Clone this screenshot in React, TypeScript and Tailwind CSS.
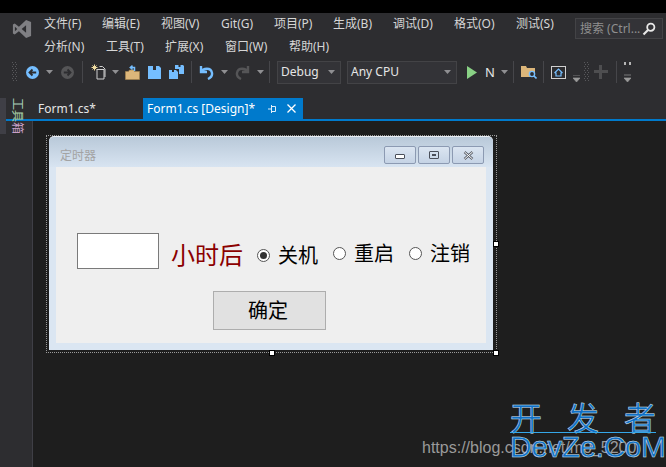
import React from 'react';

const uiFont = "[font-family:'Noto_Sans','Noto_Sans_CJK_SC',sans-serif]";

const firstMenu = [
  { label: '文件(F)', width: 'w-[58px]' },
  { label: '编辑(E)', width: 'w-[59px]' },
  { label: '视图(V)', width: 'w-[60px]' },
  { label: 'Git(G)', width: 'w-[53px]' },
  { label: '项目(P)', width: 'w-[59px]' },
  { label: '生成(B)', width: 'w-[60px]' },
  { label: '调试(D)', width: 'w-[61px]' },
  { label: '格式(O)', width: 'w-[62px]' },
  { label: '测试(S)', width: 'w-[59px]' },
];

const secondMenu = [
  { label: '分析(N)', width: 'w-[62px]' },
  { label: '工具(T)', width: 'w-[59px]' },
  { label: '扩展(X)', width: 'w-[60px]' },
  { label: '窗口(W)', width: 'w-[64px]' },
  { label: '帮助(H)', width: 'w-[60px]' },
];

function Caret({ className = '' }: { className?: string }) {
  return (
    <svg width="7" height="4" viewBox="0 0 7 4" className={`shrink-0 ${className}`}>
      <path d="M0 0h7L3.5 4z" fill="#8f8f92" />
    </svg>
  );
}

function Sep({ className = '' }: { className?: string }) {
  return <div className={`w-px h-[22px] bg-[#46464a] shrink-0 ${className}`} />;
}

function Grip({ className = '' }: { className?: string }) {
  return (
    <svg width="5" height="20" viewBox="0 0 5 20" className={`shrink-0 ${className}`}>
      {[0, 2, 4, 6, 8, 10, 12, 14, 16, 18].map((y) => (
        <g key={y} fill="#58585b">
          <rect x={y % 4 === 0 ? 0 : 1} y={y} width="1" height="1" />
          <rect x={y % 4 === 0 ? 3 : 4} y={y} width="1" height="1" />
        </g>
      ))}
    </svg>
  );
}

function Combo({ label, width }: { label: string; width: string }) {
  return (
    <div className={`${width} h-[23px] flex items-center justify-between bg-[#333337] border border-[#434346] pl-[3px] pr-[5px] shrink-0`}>
      <span className="text-[12px] leading-none text-[#e6e6e6]">{label}</span>
      <Caret />
    </div>
  );
}

function TitleButton({ children }: { children: React.ReactNode }) {
  return (
    <div className="w-8 h-[18px] rounded-[2px] border border-[#8c9ab2] bg-gradient-to-b from-[#dbe5f1] to-[#c5d3e5] flex items-center justify-center">
      {children}
    </div>
  );
}

function Radio({ checked = false, className = '' }: { checked?: boolean; className?: string }) {
  return (
    <div className={`w-[13px] h-[13px] rounded-full border border-[#555] bg-white flex items-center justify-center shrink-0 ${className}`}>
      {checked && <div className="w-[7px] h-[7px] rounded-full bg-[#333]" />}
    </div>
  );
}

function Handle({ className }: { className: string }) {
  return <div className={`absolute w-[6px] h-[6px] bg-white border border-black ${className}`} />;
}

export default function App() {
  return (
    <div className={`relative w-[666px] h-[467px] overflow-hidden bg-[#1e1e1e] flex flex-col ${uiFont}`}>
      <div className="h-[13px] bg-black shrink-0" />

      {/* title + menu */}
      <div className="bg-[#2d2d30] h-[106px] shrink-0 flex flex-col">
        <div className="flex h-[44px] shrink-0">
          <svg width="20" height="20" viewBox="0 0 22 22" className="ml-3 mt-[6px] shrink-0">
            <path d="M15.5 1L21 3.4v15.2L15.5 21 7.6 13.6 3 17l-2-1V6l2-1 4.6 3.4zM15.5 6.8L10.6 11l4.9 4.2zM3.2 8.4v5.2L5.8 11z" fill="#7f7f83" fillRule="evenodd" />
          </svg>
          <div className="ml-3 w-[531px] text-[12px] leading-[23px] text-[#d6d6d6] shrink-0">
            <div className="flex h-[23px] mt-[-1px]">
              {firstMenu.map((m) => (
                <span key={m.label} className={`${m.width} shrink-0 whitespace-nowrap`}>{m.label}</span>
              ))}
            </div>
            <div className="flex h-[22px]">
              {secondMenu.map((m) => (
                <span key={m.label} className={`${m.width} shrink-0 whitespace-nowrap`}>{m.label}</span>
              ))}
            </div>
          </div>
          <div className="w-[88px] h-[21px] mt-[5px] border border-[#434346] bg-[#333337] flex items-center justify-between pl-1 pr-[6px] text-[12px] text-[#8f8f8f] shrink-0">
            <span className="whitespace-nowrap">搜索 (Ctrl...</span>
            <svg width="14" height="14" viewBox="0 0 14 14" className="shrink-0">
              <circle cx="8.8" cy="5.2" r="3.6" fill="none" stroke="#e8e8e8" strokeWidth="1.8" />
              <path d="M6 8L1.5 12.5" stroke="#e8e8e8" strokeWidth="2.2" />
            </svg>
          </div>
        </div>

        {/* toolbar */}
        <div className="flex items-center h-[26px] mt-[2px] shrink-0">
          <Grip className="ml-3" />
          <svg width="13" height="13" viewBox="0 0 14 14" className="ml-[9px] shrink-0">
            <circle cx="7" cy="7" r="7" fill="#75beff" />
            <path d="M11 7H4M7 3.8L3.8 7 7 10.2" fill="none" stroke="#2d2d30" strokeWidth="2" />
          </svg>
          <Caret className="ml-[7px]" />
          <svg width="13" height="13" viewBox="0 0 14 14" className="ml-2 shrink-0">
            <circle cx="7" cy="7" r="7" fill="#555557" />
            <path d="M3 7h7M7 3.8L10.2 7 7 10.2" fill="none" stroke="#2d2d30" strokeWidth="2" />
          </svg>
          <Sep className="ml-[8px]" />
          <svg width="15" height="16" viewBox="0 0 15 16" className="ml-2 shrink-0">
            <path d="M6 5.5h7v9.500H6zM8.500 2.500h3l2.500 2.500v8" fill="none" stroke="#d0d0d0" strokeWidth="1" />
            <path d="M3.5 0.5v6M0.5 3.5h6M1.500 1.500l4 4M5.500 1.500l-4 4" stroke="#f0dca0" strokeWidth="1" />
          </svg>
          <Caret className="ml-[6px]" />
          <svg width="15" height="15" viewBox="0 0 15 15" className="ml-[6px] shrink-0">
            <path d="M0.500 6.500h3l1-1.500h5v1.500h5v8h-14z" fill="#dcb67a" stroke="#a5844f" strokeWidth="0.7" />
            <path d="M9.500 6V2.500H5.500M7.500 0.700L5.300 2.500 7.500 4.500" fill="none" stroke="#75beff" strokeWidth="1.500" />
          </svg>
          <svg width="13" height="13" viewBox="0 0 13 13" className="ml-[8px] shrink-0">
            <path d="M0 0h11l2 2v11H0z" fill="#75beff" />
            <path d="M5 0h3v4H5z" fill="#2d2d30" />
          </svg>
          <svg width="15" height="14" viewBox="0 0 15 14" className="ml-2 shrink-0">
            <path d="M0 5h7l2 2v7H0z" fill="#75beff" />
            <path d="M6 0h8l1 1v8h-5V4H6z" fill="#75beff" />
            <path d="M3 5h2v2H3zM9.500 0h2v2h-2z" fill="#2d2d30" />
          </svg>
          <Sep className="ml-[7px]" />
          <svg width="15" height="16" viewBox="0 0 15 16" className="ml-[7px] shrink-0">
            <path d="M2 2v6h6M2 8c2-4 10-5 11 1 .5 3-2 5-4 6" fill="none" stroke="#75beff" strokeWidth="2.4" />
          </svg>
          <Caret className="ml-[7px]" />
          <svg width="15" height="16" viewBox="0 0 15 16" className="ml-[7px] shrink-0">
            <path d="M13 2v6H7M13 8C11 4 3 3 2 9c-.5 3 2 5 4 6" fill="none" stroke="#555557" strokeWidth="2.4" />
          </svg>
          <Caret className="ml-[7px]" />
          <Sep className="ml-[5px]" />
          <div className="ml-[7px]"><Combo label="Debug" width="w-[64px]" /></div>
          <div className="ml-[6px]"><Combo label="Any CPU" width="w-[110px]" /></div>
          <svg width="10" height="13" viewBox="0 0 10 13" className="ml-[10px] shrink-0">
            <path d="M0 0l10 6.500L0 13z" fill="#89d185" />
          </svg>
          <span className="ml-2 w-[15px] text-[13px] leading-none text-[#e6e6e6] shrink-0">N</span>
          <Caret className="ml-px" />
          <Sep className="ml-[5px]" />
          <svg width="16" height="14" viewBox="0 0 16 14" className="ml-[7px] shrink-0">
            <path d="M0 1h5l1 2h8v9H0z" fill="#dcb67a" />
            <circle cx="11" cy="9" r="2.600" fill="#2d2d30" stroke="#75beff" strokeWidth="1.400" />
            <path d="M13 11l2.500 2.500" stroke="#75beff" strokeWidth="1.600" />
          </svg>
          <Sep className="ml-[6px]" />
          <svg width="15" height="13" viewBox="0 0 15 13" className="ml-[7px] shrink-0">
            <rect x="0.500" y="0.500" width="14" height="12" fill="none" stroke="#d0d0d0" />
            <path d="M3.500 7L7.500 3l4 4M5 6.500V10h5V6.500" fill="none" stroke="#75beff" strokeWidth="1.200" />
          </svg>
          <svg width="7" height="7" viewBox="0 0 7 7" className="ml-[7px] mt-[12px] shrink-0">
            <path d="M0 0h7M0 3h7L3.500 7z" stroke="#9a9a9a" fill="#9a9a9a" strokeWidth="0.700" />
          </svg>
          <Grip className="ml-1" />
          <svg width="14" height="14" viewBox="0 0 14 14" className="ml-[5px] shrink-0">
            <path d="M5 0h3v5h6v3H8v6H5V8H0V5h5z" fill="#4e4e50" />
          </svg>
          <Sep className="ml-[8px]" />
          <svg width="7" height="20" viewBox="0 0 7 20" className="ml-[7px] shrink-0">
            <path d="M0 0h2v3H0zM5 0h2v3H5z" fill="#b5b5b5" />
            <path d="M0 13h7M0 16h7l-3.500 4z" stroke="#9a9a9a" fill="#9a9a9a" strokeWidth="0.700" />
          </svg>
        </div>

        {/* tabs */}
        <div className="flex mt-[13px] h-[21px] shrink-0 text-[12px] leading-[22px]">
          <div className="ml-[33px] w-[110px] pl-[5px] text-[#e6e6e6] whitespace-nowrap">Form1.cs*</div>
          <div className="w-[160px] bg-[#007acc] pl-1 text-white flex items-center whitespace-nowrap">
            <span className="w-[121px]">Form1.cs [Design]*</span>
            <svg width="9" height="8" viewBox="0 0 9 8" className="shrink-0">
              <path d="M0 4h3M3.500 1.500h4v5h-4zM3.500 0v8" fill="none" stroke="#dfeefa" strokeWidth="1" />
            </svg>
            <svg width="9" height="9" viewBox="0 0 9 9" className="ml-[10px] shrink-0">
              <path d="M0.500 0.500l8 8M8.500 0.500l-8 8" stroke="#fff" strokeWidth="1.300" />
            </svg>
          </div>
        </div>
      </div>

      <div className="h-[2px] bg-[#007acc] shrink-0" />

      <div className="flex flex-1 min-h-0">
        <div className="w-[33px] bg-[#2d2d30] border-r border-[#3f3f46] shrink-0" />
        <div className="flex-1 pl-[13px] pt-[14px]">
          {/* form designer */}
          <div className="relative w-[451px] h-[218px] border border-dotted border-[#9a9a9a] pl-[2px] pr-[3px] pb-[2px]">
            <div className="h-full rounded-t-[5px] bg-[#dbe6f2] border-t border-[#e8edf3] flex flex-col">
              <div className="h-[30px] shrink-0 rounded-t-[5px] bg-gradient-to-b from-[#b9c9d9] to-[#d8e4f1] flex items-start justify-between pl-[11px] pr-[9px] pt-[9px]">
                <span className="text-[12px] leading-[14px] text-[#a3a3a3] mt-[3px]">定时器</span>
                <div className="flex gap-[2px]">
                  <TitleButton>
                    <div className="w-[10px] h-[5px] border border-[#4a4f5a] bg-white rounded-[1px] mt-[3px]" />
                  </TitleButton>
                  <TitleButton>
                    <div className="w-[10px] h-[8px] border border-[#4a4f5a] flex items-center justify-center rounded-[1px]">
                      <div className="w-1 h-[2px] border border-[#4a4f5a]" />
                    </div>
                  </TitleButton>
                  <TitleButton>
                    <svg width="11" height="9" viewBox="0 0 11 9">
                      <path d="M1.500 1l8 7M9.500 1l-8 7" stroke="#5a5f6a" strokeWidth="2.400" />
                      <path d="M1.500 1l8 7M9.500 1l-8 7" stroke="#fff" strokeWidth="1" />
                    </svg>
                  </TitleButton>
                </div>
              </div>
              <div className="mx-[7px] mb-[7px] flex-1 bg-[#efefef] flex flex-col items-start pt-[66px]">
                <div className="flex items-center h-[36px] text-[20px] leading-none text-black">
                  <div className="ml-[21px] w-[82px] h-[36px] bg-white border border-[#7a7a7a] shrink-0" />
                  <span className="ml-3 text-[24px] text-[#8b0000] whitespace-nowrap mt-[7px]">小时后</span>
                  <Radio checked className="ml-[14px] mt-[9px]" />
                  <span className="ml-2 whitespace-nowrap mt-[10px]">关机</span>
                  <Radio className="ml-[15px] mt-[4px]" />
                  <span className="ml-2 whitespace-nowrap mt-[5px]">重启</span>
                  <Radio className="ml-[15px] mt-[4px]" />
                  <span className="ml-2 whitespace-nowrap mt-[5px]">注销</span>
                </div>
                <div className="ml-[157px] mt-[22px] w-[113px] h-[39px] bg-[#e1e1e1] border border-[#adadad] flex items-center justify-center pr-[3px] text-[20px] text-black">
                  确定
                </div>
              </div>
            </div>
            <Handle className="right-[-3px] top-[105px]" />
            <Handle className="left-[222px] bottom-[-4px]" />
            <Handle className="right-[-3px] bottom-[-4px]" />
          </div>
        </div>
      </div>

      {/* sidebar tab */}
      <div className="absolute left-0 top-[98px] w-[6px] h-[36px] bg-[#3f3f46]" />
      <div className="absolute left-[11px] top-[98px] text-[12px] leading-[13px] [writing-mode:vertical-lr] [text-orientation:sideways] whitespace-nowrap">
        <span className="text-[#a8d0b8]">工</span>
        <span className="text-[#a8d0a8]">具</span>
        <span className="text-[#c8a0c8]">箱</span>
      </div>

      {/* watermark */}
      <div className="absolute left-[422px] top-[439px] text-[16px] leading-[18px] text-[#9a9a9a] whitespace-nowrap [font-family:'Liberation_Sans',sans-serif]">
        https://blog.csdn.net/m0_5200
      </div>
      <div className="absolute left-[510px] top-[400px] w-[146px] flex flex-col items-stretch">
        <div className="flex justify-between h-[32px] text-[32px] leading-[32px] text-[#0f6fc6] [-webkit-text-stroke:0.5px_#d8e6f2] [font-family:'Noto_Sans_CJK_SC',sans-serif]">
          <span>开</span>
          <span>发</span>
          <span>者</span>
        </div>
        <div className="h-px bg-[#35a7e8]" />
        <div className="text-[30px] leading-[27px] text-[#0f6fc6] [-webkit-text-stroke:0.5px_#d8e6f2] tracking-[-0.5px] whitespace-nowrap [font-family:'Liberation_Sans',sans-serif]">
          DevZe.CoM
        </div>
      </div>
    </div>
  );
}
